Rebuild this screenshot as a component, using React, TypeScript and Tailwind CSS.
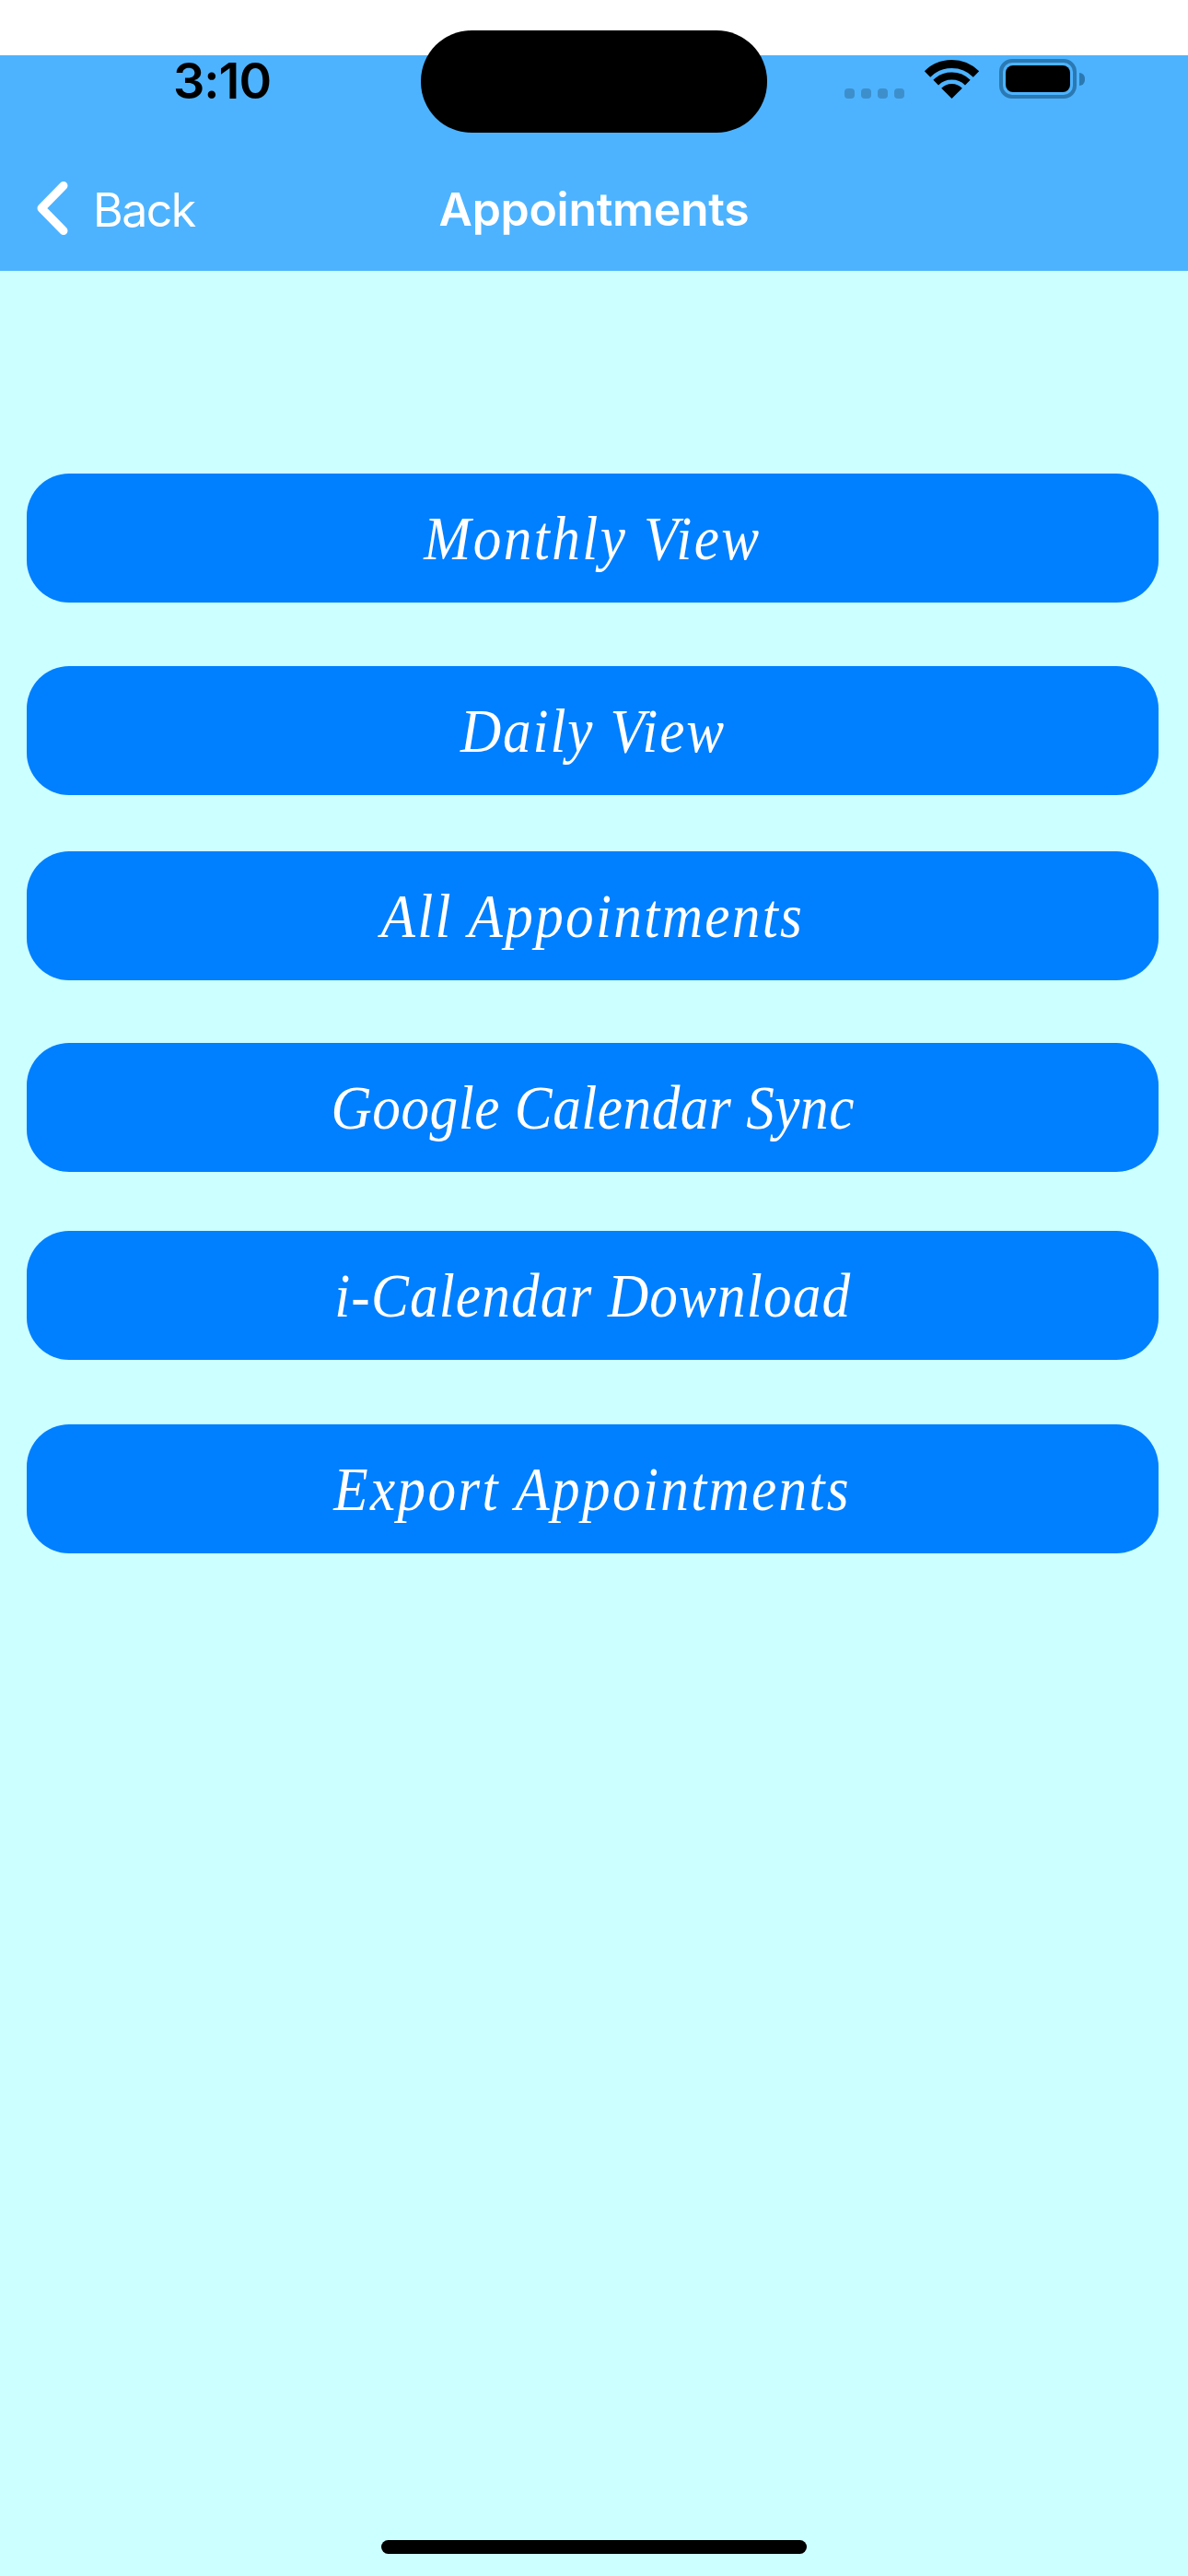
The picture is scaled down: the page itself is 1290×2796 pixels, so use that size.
const menuItems = [
  { label: 'Monthly View', className: 'mt-[220px]', tracking: 'tracking-[2.7px]' },
  { label: 'Daily View', className: 'mt-[69px]', tracking: 'tracking-[2.1px]' },
  { label: 'All Appointments', className: 'mt-[61px]', tracking: 'tracking-[2.6px]' },
  { label: 'Google Calendar Sync', className: 'mt-[68px]', tracking: 'tracking-[0.6px]' },
  { label: 'i-Calendar Download', className: 'mt-[64px]', tracking: 'tracking-[1.3px]' },
  { label: 'Export Appointments', className: 'mt-[70px]', tracking: 'tracking-[2.6px]' },
]

function WifiIcon() {
  return (
    <svg width="57" height="42" viewBox="0 0 57 42" className="overflow-visible">
      <path d="M2 15.5 A37.5 37.5 0 0 1 55 15.5" fill="none" stroke="#000" strokeWidth="9" />
      <path d="M11.2 24.7 A24.5 24.5 0 0 1 45.8 24.7" fill="none" stroke="#000" strokeWidth="8" />
      <path d="M28.5 42 L17.2 30.7 A16 16 0 0 1 39.8 30.7 Z" fill="#000" />
    </svg>
  )
}

function BatteryIcon() {
  return (
    <div className="flex items-center">
      <div className="flex h-[43px] w-[84px] items-stretch rounded-[14px] border-[4px] border-[#2b79b3] p-[3px]">
        <div className="w-full rounded-[8px] bg-black" />
      </div>
      <div className="ml-[3px] h-[14px] w-[6px] rounded-r-full bg-[#2b79b3]" />
    </div>
  )
}

export default function App() {
  return (
    <div className="relative flex h-[2796px] w-[1290px] flex-col overflow-hidden bg-[#ccffff] font-['Inter',sans-serif]">
      {/* notch sits over the status bar */}
      <div className="absolute left-[457px] top-[33px] h-[111px] w-[376px] rounded-[55px] bg-black" />

      <div className="h-[60px] bg-white" />

      <header className="h-[234px] bg-[#4db3ff]">
        <div className="flex h-[47px] items-start pl-[188px] pr-[112px]">
          <span className="text-[54px] leading-[56px] font-semibold tracking-[-1px] text-black">3:10</span>
          <div className="ml-auto flex items-end self-end">
            <div className="mr-[23px] flex gap-[7px]">
              <span className="h-[11px] w-[11px] rounded-[4px] bg-[#3d8fcc]" />
              <span className="h-[11px] w-[11px] rounded-[4px] bg-[#3d8fcc]" />
              <span className="h-[11px] w-[11px] rounded-[4px] bg-[#3d8fcc]" />
              <span className="h-[11px] w-[11px] rounded-[4px] bg-[#3d8fcc]" />
            </div>
            <WifiIcon />
            <div className="ml-[23px]">
              <BatteryIcon />
            </div>
          </div>
        </div>

        <div className="relative mt-[88px] flex h-[64px] items-center justify-center">
          <div className="absolute left-[40px] top-[2px] flex items-center">
            <svg width="34" height="58" viewBox="0 0 34 58" fill="none">
              <path d="M29 4.5 L5 29 L29 53.5" stroke="#fff" strokeWidth="9" strokeLinecap="round" strokeLinejoin="round" />
            </svg>
            <span className="mt-[4px] ml-[27px] text-[50px] leading-none tracking-[-1.5px] text-white">Back</span>
          </div>
          <h1 className="text-[50px] leading-none font-semibold tracking-[-0.3px] text-white">Appointments</h1>
        </div>
      </header>

      <main className="flex flex-col pr-[32px] pl-[29px]">
        {menuItems.map((item) => (
          <button
            key={item.label}
            className={`${item.className} flex h-[140px] items-center justify-center rounded-[46px] bg-[#007fff] font-['Liberation_Serif',serif] text-[68px] italic text-white`}
          >
            <span className={`${item.tracking} inline-block scale-x-[0.9] whitespace-nowrap`}>{item.label}</span>
          </button>
        ))}
      </main>

      <div className="mt-auto mb-[24px] h-[15px] w-[462px] self-center rounded-full bg-black" />
    </div>
  )
}
